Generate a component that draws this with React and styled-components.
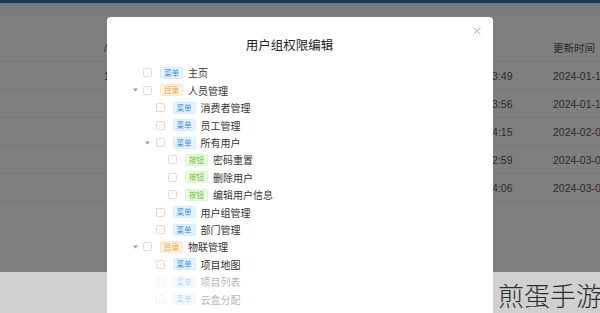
import React from "react";
import styled, { createGlobalStyle } from "styled-components";

const GlobalStyle = createGlobalStyle`
  html, body { margin: 0; padding: 0; background: #fff; }
  body { font-family: "Noto Sans CJK SC", "Noto Sans", sans-serif; overflow: hidden; }
  * { box-sizing: border-box; }
`;

const Page = styled.div`
  position: relative;
  width: 600px;
  height: 313px;
  overflow: hidden;
  background: #fff;
  display: flex;
  flex-direction: column;
`;

const TopBar = styled.div`
  height: 3px;
  background: #3a72b8;
  flex: none;
`;

const SubBar = styled.div`
  height: 12px;
  background: #f2f5f8;
  border-top: 1px solid #f6efe6;
  flex: none;
`;

const Table = styled.div`
  display: flex;
  flex-direction: column;
  margin-top: 19px;
  font-family: "Liberation Sans", "Noto Sans CJK SC", sans-serif;
  font-size: 10.5px;
  color: #555;
`;

const TRow = styled.div`
  display: grid;
  grid-template-columns: 96px 311px 138px 1fr;
  height: 28px;
  align-items: center;
  border-bottom: 1px solid #eeeeee;
  white-space: nowrap;
`;

const Cell = styled.div`
  padding-left: 8px;
  overflow: hidden;
  line-height: 14px;
  padding-top: 1px;
`;

const Overlay = styled.div`
  position: absolute;
  inset: 0;
  background: rgba(0, 0, 0, 0.5);
`;

const Modal = styled.div`
  position: absolute;
  left: 107px;
  top: 17px;
  width: 386px;
  height: 330px;
  background: #fff;
  border-radius: 4px;
  display: flex;
  flex-direction: column;
`;

const ModalHeader = styled.div`
  display: flex;
  align-items: flex-start;
  padding-right: 11px;
`;

const Title = styled.div`
  flex: 1;
  text-align: center;
  margin-top: 20px;
  font-size: 12.5px;
  line-height: 16px;
  color: #222;
  font-weight: 400;
`;

const Close = styled.div`
  width: 10px;
  height: 10px;
  margin-top: 9px;
  display: flex;
  align-items: center;
  justify-content: center;
`;

const Tree = styled.div`
  padding: 11.3px 0 0 22px;
  display: flex;
  flex-direction: column;
`;

const Node = styled.div`
  display: flex;
  align-items: center;
  height: 17.4px;
  padding-left: ${(p) => p.$level * 12.5}px;
`;

const Switcher = styled.div`
  width: 12px;
  height: 12px;
  display: flex;
  align-items: center;
  justify-content: center;
  flex: none;
`;

const Check = styled.span`
  width: 9px;
  height: 9px;
  margin-left: 2px;
  border: 1px solid #dcdcdc;
  border-radius: 2px;
  background: #fff;
  flex: none;
`;

const tagColors = {
  menu: { bg: "#e6f4ff", fg: "#3b8cf0", bd: "#d6ebff" },
  dir: { bg: "#fff3e0", fg: "#f39a3c", bd: "#ffe6c4" },
  btn: { bg: "#eefbe4", fg: "#5cbf2a", bd: "#def5cc" },
};

const Tag = styled.span`
  margin-left: 8px;
  width: 23px;
  height: 12px;
  border-radius: 2px;
  background: ${(p) => tagColors[p.$type].bg};
  border: 1px solid ${(p) => tagColors[p.$type].bd};
  color: ${(p) => tagColors[p.$type].fg};
  font-size: 7.5px;
  line-height: 10px;
  text-align: center;
  flex: none;
`;

const Label = styled.span`
  margin-left: 5px;
  font-size: 10px;
  color: #333;
  white-space: nowrap;
`;

const Watermark = styled.div`
  position: absolute;
  left: 0;
  right: 0;
  top: 272px;
  bottom: 0;
  background: rgba(255, 255, 255, 0.63);
  display: flex;
  justify-content: flex-end;
  align-items: flex-end;
`;

const WatermarkText = styled.span`
  font-size: 26px;
  line-height: 36px;
  color: #2c2c2c;
  font-weight: 300;
  margin-right: -2px;
  white-space: nowrap;
`;

const tagText = { menu: "菜单", dir: "目录", btn: "按钮" };

const nodes = [
  { level: 0, type: "menu", label: "主页" },
  { level: 0, type: "dir", label: "人员管理", open: true },
  { level: 1, type: "menu", label: "消费者管理" },
  { level: 1, type: "menu", label: "员工管理" },
  { level: 1, type: "menu", label: "所有用户", open: true },
  { level: 2, type: "btn", label: "密码重置" },
  { level: 2, type: "btn", label: "删除用户" },
  { level: 2, type: "btn", label: "编辑用户信息" },
  { level: 1, type: "menu", label: "用户组管理" },
  { level: 1, type: "menu", label: "部门管理" },
  { level: 0, type: "dir", label: "物联管理", open: true },
  { level: 1, type: "menu", label: "项目地图" },
  { level: 1, type: "menu", label: "项目列表" },
  { level: 1, type: "menu", label: "云盒分配" },
];

const rows = [
  ["", "1", "2024-01-12 10:13:49", "2024-01-15 09:21:33"],
  ["", "", "2024-01-12 10:23:56", "2024-01-18 11:02:45"],
  ["", "", "2024-02-03 09:54:15", "2024-02-06 15:40:12"],
  ["", "", "2024-03-05 14:22:59", "2024-03-07 10:11:08"],
  ["", "", "2024-03-06 16:24:06", "2024-03-08 17:30:26"],
];

const Caret = () => (
  <svg width="5" height="4" viewBox="0 0 5 4">
    <path d="M0 0.5 L5 0.5 L2.5 3.5 Z" fill="#9a9a9a" />
  </svg>
);

const CloseIcon = () => (
  <svg width="8" height="8" viewBox="0 0 8 8">
    <path d="M0.5 0.5 L7.5 7.5 M7.5 0.5 L0.5 7.5" stroke="#b5b5b5" strokeWidth="1" />
  </svg>
);

export default function App() {
  return (
    <Page>
      <GlobalStyle />
      <TopBar />
      <SubBar />
      <Table>
        <TRow>
          <Cell></Cell>
          <Cell>/ 用户组名称</Cell>
          <Cell>创建时间</Cell>
          <Cell>更新时间</Cell>
        </TRow>
        {rows.map((r, i) => (
          <TRow key={i}>
            {r.map((c, j) => (
              <Cell key={j}>{c}</Cell>
            ))}
          </TRow>
        ))}
      </Table>
      <Overlay />
      <Modal>
        <ModalHeader>
          <Title>用户组权限编辑</Title>
          <Close>
            <CloseIcon />
          </Close>
        </ModalHeader>
        <Tree>
          {nodes.map((n, i) => (
            <Node key={i} $level={n.level}>
              <Switcher>{n.open ? <Caret /> : null}</Switcher>
              <Check />
              <Tag $type={n.type}>{tagText[n.type]}</Tag>
              <Label>{n.label}</Label>
            </Node>
          ))}
        </Tree>
      </Modal>
      <Watermark>
        <WatermarkText>煎蛋手游</WatermarkText>
      </Watermark>
    </Page>
  );
}
